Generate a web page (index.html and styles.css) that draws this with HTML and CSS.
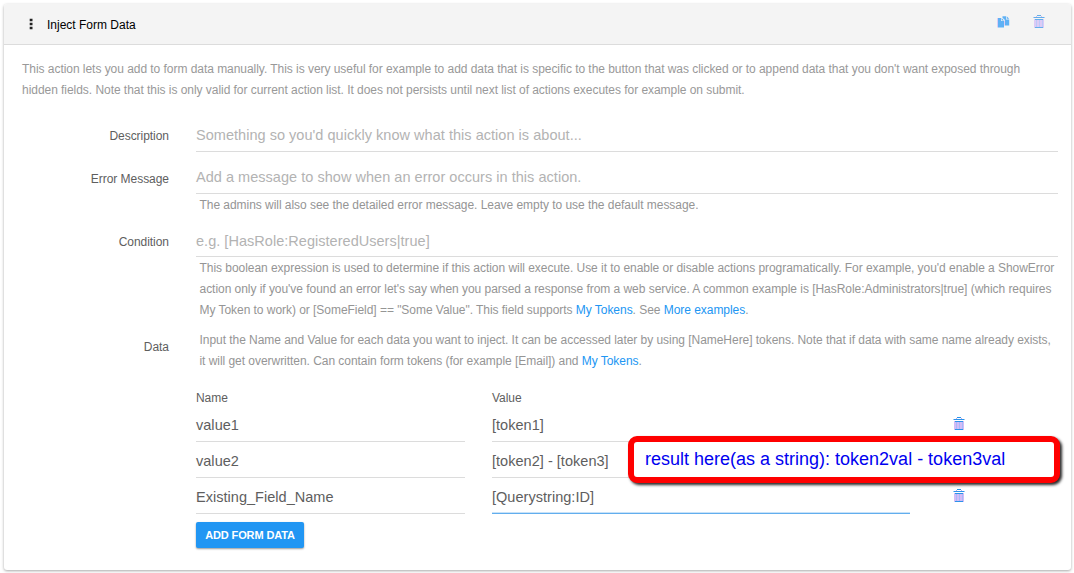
FILE: index.html
```
<!DOCTYPE html>
<html lang="en">
<head>
<meta charset="utf-8">
<title>Inject Form Data</title>
<link rel="stylesheet" href="styles.css">
</head>
<body>
<svg class="defs" width="0" height="0">
  <symbol id="trash" viewBox="0 0 12 13">
    <path d="M1 4h10v9H1z" fill="#d3bcf6"/>
    <path d="M3.500 5v7M6.500 5v7M9.500 5v7" stroke="#a9b8fa" stroke-width="1"/>
    <path d="M.5 2.500h11M4 .5h4M2 4.500h8M2 12.500h8" stroke="#2c93ea"/>
    <path d="M3.500 1v1M8.500 1v1" stroke="#c4a6e8"/>
  </symbol>
</svg>
<main class="card">
  <header class="card-head">
    <svg class="grip" width="4" height="12" viewBox="0 0 4 12"><path d="M.7 .7h2.800v2.500H.7zM.7 4.700h2.800v2.500H.7zM.7 8.700h2.800v2.500H.7z" fill="#222"/></svg>
    <h1 class="title">Inject Form Data</h1>
    <svg class="copy" width="13" height="12" viewBox="0 0 13 12">
      <path d="M1 2h3v3h3v6.500H1z" fill="#5fb1f5"/>
      <path d="M4.600 2L7 4.400H4.600z" fill="#5fb1f5"/>
      <path d="M5.500 .2H9v3.300h3.200v6H7.900V4L5.500 1.700z" fill="#5fb1f5"/>
      <path d="M9.700 .3l2.500 2.500H9.700z" fill="#5fb1f5"/>
      <path d="M.5 2v9.500M7.500 4.500v5" stroke="#ddcdf3"/>
    </svg>
    <svg class="head-trash" width="12" height="13"><use href="#trash"/></svg>
  </header>
  <div class="card-body">
    <p class="intro">This action lets you add to form data manually. This is very useful for example to add data that is specific to the button that was clicked or to append data that you don't want exposed through<br>hidden fields. Note that this is only valid for current action list. It does not persists until next list of actions executes for example on submit.</p>
    <div class="row row-desc">
      <label class="label">Description</label>
      <div><div class="input placeholder">Something so you'd quickly know what this action is about...</div></div>
    </div>
    <div class="row row-error">
      <label class="label">Error Message</label>
      <div>
        <div class="input placeholder">Add a message to show when an error occurs in this action.</div>
        <p class="help">The admins will also see the detailed error message. Leave empty to use the default message.</p>
      </div>
    </div>
    <div class="row row-cond">
      <label class="label">Condition</label>
      <div>
        <div class="input placeholder">e.g. [HasRole:RegisteredUsers|true]</div>
        <p class="help">This boolean expression is used to determine if this action will execute. Use it to enable or disable actions programatically. For example, you'd enable a ShowError<br>action only if you've found an error let's say when you parsed a response from a web service. A common example is [HasRole:Administrators|true] (which requires<br>My Token to work) or [SomeField] == "Some Value". This field supports <a>My Tokens</a>. See <a>More examples</a>.</p>
      </div>
    </div>
    <div class="row row-data">
      <label class="label">Data</label>
      <div>
        <p class="help help-data">Input the Name and Value for each data you want to inject. It can be accessed later by using [NameHere] tokens. Note that if data with same name already exists,<br>it will get overwritten. Can contain form tokens (for example [Email]) and <a>My Tokens</a>.</p>
        <div class="grid">
          <div class="col-head">Name</div><div class="col-head">Value</div><span></span>
          <div class="input">value1</div><div class="input">[token1]</div><svg class="del" width="12" height="13"><use href="#trash"/></svg>
          <div class="input">value2</div><div class="input">[token2] - [token3]</div><span></span>
          <div class="input">Existing_Field_Name</div><div class="input focused">[Querystring:ID]</div><svg class="del" width="12" height="13"><use href="#trash"/></svg>
        </div>
        <button class="add">ADD FORM DATA</button>
      </div>
    </div>
  </div>
</main>
<div class="callout">result here(as a string): token2val - token3val</div>
</body>
</html>
```
FILE: styles.css
```
* { box-sizing: border-box; }
body {
  margin: 0;
  height: 573px;
  padding: 4px 3px 3px 4px;
  overflow: hidden;
  background: #fff;
  color: #5e5e5e;
  font: 12px/21px "Liberation Sans", Arial, sans-serif;
  letter-spacing: -.043px;
  white-space: nowrap;
}
p, h1 { margin: 0; }
.defs { position: absolute; }
.card {
  height: 566px;
  border-radius: 3px;
  background: #fff;
  box-shadow: 0 1px 3px rgba(0, 0, 0, .35);
}
.card-head {
  display: flex;
  align-items: center;
  height: 41px;
  padding: 0 26px 0 25px;
  border-bottom: 1px solid #dcdcdc;
  border-radius: 3px 3px 0 0;
  background: #f4f4f4;
}
.grip { margin-bottom: 1px; }
.title {
  margin: 0 auto 0 14px;
  padding-top: 2px;
  color: #000;
  font-size: 12px;
  font-weight: 400;
  letter-spacing: 0;
}
.copy { margin: 0 23px 5px 0; }
.head-trash { margin-bottom: 5px; opacity: .72; }
.card-body { padding: 14px 13px 0 18px; }
.intro { color: #999; }
.row {
  display: grid;
  grid-template-columns: 147px 862px;
  column-gap: 27px;
}
.label { text-align: right; }
.row-desc { margin-top: 17px; }
.row-error { margin-top: 8px; }
.row-cond { margin-top: 7px; }
.row-data { margin-top: 8px; }
.row-desc .label { padding-top: 8px; }
.row-error .label, .row-cond .label { padding-top: 9px; }
.row-data .label { padding-top: 8px; }
.input {
  height: 34px;
  border-bottom: 1px solid #dcdcdc;
  font-size: 14.5px;
  letter-spacing: .03px;
  line-height: 35px;
}
.row-cond .input { line-height: 37px; }
.placeholder { color: #b3b3b3; }
.help {
  padding: 1px 0 0 3.5px;
  color: #959595;
}
a { color: #2196f3; }
.grid {
  display: grid;
  grid-template-columns: 269px 418px 12px;
  column-gap: 27px;
  row-gap: 2px;
  margin-top: 16px;
}
.col-head { height: 18px; }
.del { margin: 9px 0 0 16px; }
.focused {
  border-bottom-color: #62aeee;
  box-shadow: inset 0 -1px #c8e2f8;
}
.add {
  display: block;
  width: 108px;
  height: 26px;
  margin-top: 8px;
  padding: 0;
  border: 0;
  border-radius: 2px;
  background: #2196f3;
  box-shadow: 0 1px 2px rgba(0, 0, 0, .4);
  color: #fff;
  font: 700 11px/26px "Liberation Sans", Arial, sans-serif;
  letter-spacing: -.13px;
}
.callout {
  position: absolute;
  left: 628px;
  top: 436px;
  width: 432px;
  height: 47px;
  padding-left: 11px;
  border: 6px solid #f00;
  border-radius: 9px;
  background: #fff;
  box-shadow: 2px 2px 3px rgba(0, 0, 0, .85);
  color: #0000f0;
  font-size: 18px;
  letter-spacing: 0;
  line-height: 34px;
}
```
